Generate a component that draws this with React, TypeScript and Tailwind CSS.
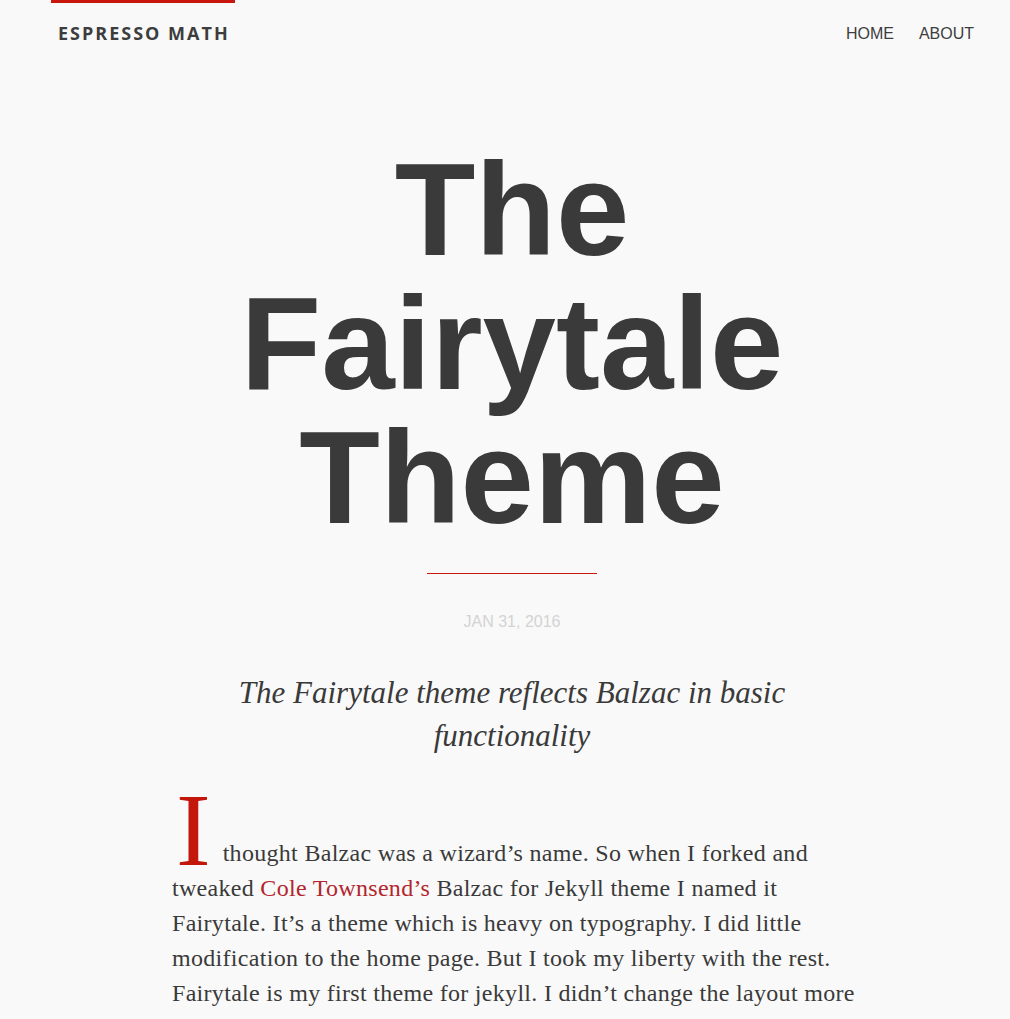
export default function App() {
    return (
        <div className="min-h-screen bg-[#f9f9f9] text-[#3a3a3a]">
            {/* Header */}
            <header className="flex items-start justify-between pl-[51px] pr-[36px]">
                <a className="block border-t-[3px] border-[#c8170d] pl-[7px] pr-[5px] pt-[18px] text-[18px] leading-[24px] font-bold tracking-[2px] text-[#3d3d3d] font-['Open_Sans',sans-serif]">
                    ESPRESSO MATH
                </a>
                <nav className="flex gap-[25px] pt-[22px] text-[16px] leading-[24px] text-[#3d3d3d] font-['Liberation_Sans',Arial,sans-serif]">
                    <a>HOME</a>
                    <a>ABOUT</a>
                </nav>
            </header>

            <main className="pl-[14px] pb-10">
                <article className="mx-auto w-[680px]">
                    <h1 className="mt-[97px] text-center text-[132px] leading-[134px] font-bold text-[#3a3a3a] font-['Liberation_Sans',Arial,sans-serif]">
                        The
                        <br />
                        Fairytale
                        <br />
                        Theme
                    </h1>

                    {/* red rule */}
                    <div className="mx-auto mt-[28px] w-[170px] border-t border-[#c8170d]" />

                    <p className="mt-[36px] text-center text-[16px] leading-[24px] text-[#d3d3d3] font-['Liberation_Sans',Arial,sans-serif]">
                        JAN 31, 2016
                    </p>

                    <h2 className="mt-[37px] text-center text-[31px] leading-[43px] italic text-[#3a3a3a] font-['Liberation_Serif',serif]">
                        The Fairytale theme reflects Balzac in basic functionality
                    </h2>

                    <p className="mt-[79px] w-[720px] text-[24px] leading-[35px] tracking-[0.3px] text-[#3a3a3a] font-['Liberation_Serif',serif]">
                        <span className="float-left -mt-[46px] ml-[4px] mr-[12px] text-[104px] leading-[80px] tracking-normal text-[#c3170c]">I</span>
                        thought Balzac was a wizard’s name. So when I forked and
                        <br />
                        tweaked <a className="text-[#b3262e]">Cole Townsend’s</a> Balzac for Jekyll theme I named it
                        <br />
                        Fairytale. It’s a theme which is heavy on typography. I did little
                        <br />
                        modification to the home page. But I took my liberty with the rest.
                        <br />
                        Fairytale is my first theme for jekyll. I didn’t change the layout more
                        <br />
                        than it was needed, but I did tweak the fonts, the colors and
                        <br />
                        a handful of the little details here and there.
                    </p>
                </article>
            </main>
        </div>
    );
}
